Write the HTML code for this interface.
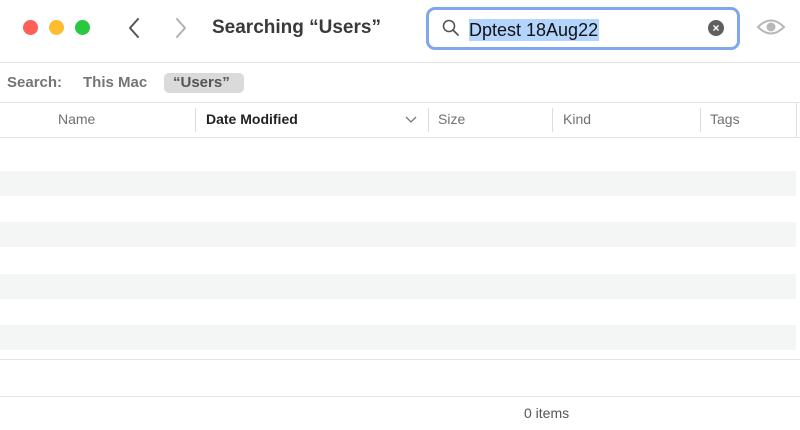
<!DOCTYPE html>
<html><head><style>
body{margin:0;width:800px;height:430px;background:#fff;font-family:"Liberation Sans",sans-serif;position:relative;overflow:hidden}
.a{position:absolute}
.dot{position:absolute;top:20px;width:15px;height:15px;border-radius:50%}
.line{position:absolute;left:0;width:800px;height:1px;background:#e3e3e3}
.stripe{position:absolute;left:0;width:796px;background:#f4f5f5}
.hd{position:absolute;top:111px;font-size:14px;color:#707070}
.sep{position:absolute;top:108px;width:1px;height:24px;background:#dcdcdc}
</style></head><body>
<div class="dot" style="left:23px;background:#fe5f57"></div>
<div class="dot" style="left:49px;background:#febc2e"></div>
<div class="dot" style="left:75px;background:#28c840"></div>
<svg class="a" style="left:126px;top:16px" width="16" height="24"><path d="M12 3 L4 12 L12 21" stroke="#555" stroke-width="2" fill="none" stroke-linecap="round" stroke-linejoin="round"/></svg>
<svg class="a" style="left:173px;top:16px" width="16" height="24"><path d="M4 3 L12 12 L4 21" stroke="#b0b0b0" stroke-width="2" fill="none" stroke-linecap="round" stroke-linejoin="round"/></svg>
<div class="a" style="left:212px;top:17px;font-size:19px;font-weight:bold;color:#3a3a3a">Searching “Users”</div>
<div class="a" style="left:426px;top:7px;width:308px;height:37px;border:3px solid #7fa6ee;border-radius:9px;background:#fff"></div>
<svg class="a" style="left:442px;top:19px" width="18" height="18"><circle cx="7" cy="7" r="5.5" stroke="#555" stroke-width="1.6" fill="none"/><path d="M11 11 L16 16" stroke="#555" stroke-width="1.8" stroke-linecap="round"/></svg>
<div class="a" style="left:469px;top:19px;height:22px;background:#b3d4fd;font-size:18px;color:#111;line-height:22px;padding-right:1px">Dptest 18Aug22</div>
<div class="a" style="left:708px;top:20px;width:16px;height:16px;border-radius:50%;background:#5f5f5f;color:#fff;font-size:12px;font-weight:bold;text-align:center;line-height:16px">×</div>
<svg class="a" style="left:756px;top:16px" width="30" height="22"><path d="M2 11 Q15 -2 28 11 Q15 24 2 11Z" stroke="#b8b8b8" stroke-width="2" fill="none"/><circle cx="15" cy="11" r="4.5" fill="#b8b8b8"/></svg>
<div class="line" style="top:62px"></div>
<div class="a" style="left:7px;top:74px;font-size:15px;font-weight:bold;color:#757575">Search:</div>
<div class="a" style="left:83px;top:74px;font-size:15px;font-weight:bold;color:#757575">This Mac</div>
<div class="a" style="left:164px;top:73px;width:80px;height:20px;border-radius:5px;background:#dadada"></div>
<div class="a" style="left:173px;top:74px;font-size:15px;font-weight:bold;color:#555">“Users”</div>
<div class="line" style="top:102px"></div>
<div class="hd" style="left:58px">Name</div>
<div class="sep" style="left:195px"></div>
<div class="hd" style="left:206px;color:#222;font-weight:bold">Date Modified</div>
<svg class="a" style="left:405px;top:116px" width="12" height="8"><path d="M1 1 L6 6 L11 1" stroke="#777" stroke-width="1.3" fill="none"/></svg>
<div class="sep" style="left:428px"></div>
<div class="hd" style="left:438px">Size</div>
<div class="sep" style="left:552px"></div>
<div class="hd" style="left:563px">Kind</div>
<div class="sep" style="left:700px"></div>
<div class="hd" style="left:710px">Tags</div>
<div class="a" style="left:796px;top:102px;width:1px;height:35px;background:#e0e0e0"></div>
<div class="line" style="top:137px"></div>
<div class="stripe" style="top:171px;height:25px"></div>
<div class="stripe" style="top:222px;height:25px"></div>
<div class="stripe" style="top:274px;height:25px"></div>
<div class="stripe" style="top:325px;height:25px"></div>
<div class="line" style="top:359px"></div>
<div class="line" style="top:396px"></div>
<div class="a" style="left:524px;top:405px;font-size:14px;color:#555">0 items</div>
</body></html>
